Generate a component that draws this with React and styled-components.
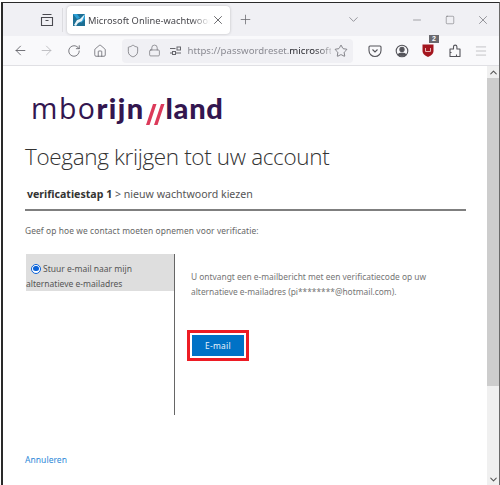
import React from 'react';
import styled, { createGlobalStyle } from 'styled-components';
import { ArrowLeft, ArrowRight, RotateCw, Home, Shield, Lock, Star, Menu, X, Plus, ChevronDown, ChevronUp, Minus, Square } from 'lucide-react';

const Global = createGlobalStyle`
  html, body { margin: 0; padding: 0; background: #fff; overflow: hidden; }
  * { box-sizing: border-box; }
`;

const Frame = styled.div`
  width: 499px; height: 483px; margin: 2px 0 0 1px;
  border-left: 2px solid #2a2a2a; border-top: 1px solid #2a2a2a; border-right: 1px solid #6a6a6a;
  display: flex; flex-direction: column; overflow: hidden;
  font-family: "Noto Sans", "Open Sans", sans-serif;
`;
const TabBar = styled.div`
  height: 33px; flex: none; background: #f0f0f4; display: flex; align-items: center; position: relative;
`;
const TabListButton = styled.div`
  width: 24px; margin-left: 32px; display: flex; justify-content: center; color: #4a4a50;
`;
const Separator = styled.div`
  width: 1px; height: 24px; background: #dcdce0; margin-left: 3px;
`;
const Tab = styled.div`
  width: 163px; height: 28px; margin-left: 4px; background: #fff; border-radius: 4px;
  box-shadow: 0 0 3px rgba(0,0,0,.22); display: flex; align-items: center; padding-left: 6px;
  margin-top: 1px;
`;
const TabTitle = styled.span`
  font-family: "Noto Sans", sans-serif; font-size: 9.3px; color: #47474c; width: 122px; margin-left: 3px; white-space: nowrap; overflow: hidden;
  -webkit-mask-image: linear-gradient(90deg, #000 85%, transparent);
  mask-image: linear-gradient(90deg, #000 85%, transparent);
`;
const TabClose = styled.div`margin-left: 1px; display: flex; color: #3f3f44;`;
const NewTab = styled.div`margin-left: 8px; display: flex; color: #66666b; `;
const Spacer = styled.div`flex: 1;`;
const WinControls = styled.div`display: flex; align-items: center; color: #55555b;`;
const TabsChevron = styled.div`width: 16px; display: flex; justify-content: center; margin-right: 39px; color: #77777d;`;
const WinButton = styled.div`width: 33px; display: flex; justify-content: center;`;

const Toolbar = styled.div`
  height: 30px; flex: none; background: #f9f9fb; border-bottom: 1px solid #e0e0e4; display: flex; align-items: center; padding-left: 4px;
`;
const Tool = styled.div`
  width: 26.65px; flex: none; display: flex; justify-content: center; align-items: center; position: relative;
  color: ${p => p.$dim ? '#b4b4b8' : '#55555b'};
`;
const UrlBar = styled.div`
  width: 231px; height: 24px; margin: 0 9px 0 8px; background: #f0f0f4; border-radius: 4px; display: flex; align-items: center; padding-left: 1px; flex: none; position: relative;
`;
const UrlIcon = styled.div`width: 21px; display: flex; justify-content: center; color: #66666c; flex: none;`;
const UrlText = styled.div`
  font-family: "Noto Sans", sans-serif; font-size: 9.6px; color: #8a8a92; white-space: nowrap; overflow: hidden; width: 143px; margin-left: 2px;
  -webkit-mask-image: linear-gradient(90deg, #000 88%, rgba(0,0,0,.2));
  mask-image: linear-gradient(90deg, #000 88%, rgba(0,0,0,.2));
  b { font-weight: 400; color: #2a2a30; }
`;
const UrlStar = styled.div`margin-left: 3px; display: flex; color: #55555b;`;
const Badge = styled.span`
  position: absolute; top: -8px; left: 14px; width: 10px; height: 8px; background: #6a6a6f; color: #fff; font: 700 7px/8px "Liberation Sans", sans-serif; text-align: center;
`;

const Viewport = styled.div`flex: 1; display: flex; min-height: 0; background: #fff;`;
const Page = styled.div`flex: 1; padding: 23px 0 0 22px; display: flex; flex-direction: column; min-width: 0;`;
const Logo = styled.div`
  font-family: "Lato", "Open Sans", sans-serif; font-size: 29px; line-height: 38px; height: 38px; color: #33164f; margin-left: 6px; display: flex; align-items: baseline;
`;
const LogoLight = styled.span`font-family: "Open Sans", sans-serif; font-size: 28.5px; font-weight: 400; letter-spacing: 1.5px;`;
const LogoBold = styled.b`font-weight: 900; letter-spacing: ${p => p.$spacing}px;`;
const LogoSlashes = styled.svg`width: 21px; height: 21px; align-self: flex-end; margin: 0 0 2px 0; flex: none;`;
const Heading = styled.h1`
  margin: 13px 0 0; font-family: "Open Sans", "Noto Sans", sans-serif; font-weight: 300; font-size: 22.5px; letter-spacing: -.35px; line-height: 34px; color: #333; white-space: nowrap;
`;
const Crumbs = styled.div`
  margin-top: 12px; height: 25px; width: 441px; border-bottom: 2px solid #7f7f7f; font-size: 10.6px; line-height: 16px; color: #555; padding-left: 2px;
  b { color: #333; font-weight: 700; }
`;
const Intro = styled.p`
  margin: 13px 0 0; font-size: 8.4px; line-height: 14px; color: #666; letter-spacing: .1px; white-space: nowrap;
`;
const Split = styled.div`display: flex; margin-top: 16px; height: 161px; margin-left: 1px;`;
const Options = styled.div`width: 149px; border-right: 1px solid #666; flex: none;`;
const Option = styled.div`
  background: #dedede; height: 37px; font-size: 8.5px; line-height: 15px; color: #555; padding-top: 7px;
`;
const Radio = styled.span`
  display: inline-block; width: 10px; height: 10px; border-radius: 50%; border: 1.5px solid #0a62d8; margin: 0 2px 0 5px; vertical-align: -1.5px; position: relative; background: #fff;
  &::after { content: ""; position: absolute; inset: 1.2px; border-radius: 50%; background: #0a62d8; }
`;
const Detail = styled.div`flex: 1; padding: 15px 0 0 16px; position: relative;`;
const DetailText = styled.p`
  margin: 0; width: 280px; font-size: 8.4px; line-height: 15px; color: #757575;
`;
const ButtonRing = styled.div`
  margin: 31px 0 0 -4px; width: 62px; height: 31px; border: 3px solid #ed1c24; padding: 2px;
`;
const EmailButton = styled.div`
  width: 100%; height: 100%; background: #0072c6; color: #e8f2fa; font-size: 8.4px; line-height: 21px; text-align: center; letter-spacing: .3px;
`;
const Cancel = styled.a`
  margin-top: 39px; font-size: 8.5px; line-height: 12px; color: #2b88d8; letter-spacing: .05px;
`;
const ScrollBar = styled.div`width: 12px; flex: none; background: #f0f0f0; display: flex; flex-direction: column;`;
const ScrollArrow = styled.div`height: 12px; flex: none; display: flex; justify-content: center; align-items: center; color: #555; `;
const ScrollThumb = styled.div`height: 308px; flex: none; background: #cdcdcd;`;

const Favicon = () => (
  <svg width="12" height="12" viewBox="0 0 12 12">
    <rect width="12" height="12" fill="#1d6f94" />
    <path d="M0 0h4l3 4-3 1zM12 0v5L8 9 6 6z" fill="#2c9fd6" />
    <path d="M1 11l3-5 3-1 5-5-3 7-4 2-2 3z" fill="#e8f3f8" />
  </svg>
);
const TabsIcon = () => (
  <svg width="14" height="14" viewBox="0 0 14 14" fill="none" stroke="currentColor" strokeWidth="1.1">
    <path d="M2.5 1.5h9M1.5 4.5h11v8h-11zM5.5 7.5h3" />
  </svg>
);
const Sliders = () => (
  <svg width="13" height="13" viewBox="0 0 13 13" fill="none" stroke="currentColor" strokeWidth="1">
    <path d="M1 4.5h5.5M1 9h2" /><rect x="8" y="3" width="3.5" height="3" /><rect x="3.5" y="7.5" width="3" height="3" /><path d="M7 9h5" />
  </svg>
);
const Pocket = () => (
  <svg width="14" height="14" viewBox="0 0 14 14" fill="none" stroke="currentColor" strokeWidth="1.1">
    <path d="M2 2h10a1 1 0 0 1 1 1v3.5a6 6 0 0 1-12 0V3a1 1 0 0 1 1-1z" /><path d="M4.5 5.5L7 8l2.5-2.5" />
  </svg>
);
const Account = () => (
  <svg width="14" height="14" viewBox="0 0 14 14" fill="none" stroke="currentColor" strokeWidth="1.1">
    <circle cx="7" cy="7" r="5.8" /><circle cx="7" cy="5.4" r="2.1" fill="currentColor" /><path d="M3.2 10.6c1-2 6.6-2 7.6 0-1.8 1.8-5.8 1.8-7.6 0z" fill="currentColor" />
  </svg>
);
const UBlock = () => (
  <svg width="14" height="15" viewBox="0 0 14 15">
    <path d="M1.5 1.5h11v6.5c0 3-3 5-5.5 6-2.5-1-5.5-3-5.5-6z" fill="#a4161f" />
    <path d="M4.5 5v3.5h5V5" fill="none" stroke="#e8b0b0" strokeWidth="1" />
  </svg>
);
const Extensions = () => (
  <svg width="14" height="15" viewBox="0 0 14 15" fill="none" stroke="currentColor" strokeWidth="1.1" strokeLinejoin="round">
    <path d="M2 13.5V6h3.5V3.8a1.7 1.7 0 0 1 3.4 0V6h3.1v7.5z" />
    <path d="M2 9.5h1.5M8.5 13.5v-2" />
  </svg>
);

export default function App() {
  return (
    <>
      <Global />
      <Frame>
        <TabBar>
          <TabListButton><TabsIcon /></TabListButton>
          <Separator />
          <Tab>
            <Favicon />
            <TabTitle>Microsoft Online-wachtwoord opnieuw</TabTitle>
            <TabClose><X size={14} strokeWidth={1.3} /></TabClose>
          </Tab>
          <NewTab><Plus size={15} strokeWidth={1.2} /></NewTab>
          <Spacer />
          <WinControls>
            <TabsChevron><ChevronDown size={15} strokeWidth={1.2} /></TabsChevron>
            <WinButton><Minus size={12} strokeWidth={1} /></WinButton>
            <WinButton><Square size={10} strokeWidth={1.1} /></WinButton>
            <WinButton><X size={14} strokeWidth={1} /></WinButton>
          </WinControls>
        </TabBar>
        <Toolbar>
          <Tool><ArrowLeft size={15} strokeWidth={1.3} /></Tool>
          <Tool $dim><ArrowRight size={15} strokeWidth={1.3} /></Tool>
          <Tool><RotateCw size={14} strokeWidth={1.3} /></Tool>
          <Tool><Home size={14} strokeWidth={1.2} /></Tool>
          <UrlBar>
            <UrlIcon><Shield size={14} strokeWidth={1.2} /></UrlIcon>
            <UrlIcon><Lock size={13} strokeWidth={1.2} /></UrlIcon>
            <UrlIcon><Sliders /></UrlIcon>
            <UrlText>https://passwordreset.<b>microsoftonline.com</b></UrlText>
            <UrlStar><Star size={14} strokeWidth={1.2} /></UrlStar>
          </UrlBar>
          <Tool><Pocket /></Tool>
          <Tool><Account /></Tool>
          <Tool><UBlock /><Badge>2</Badge></Tool>
          <Tool><Extensions /></Tool>
          <Tool $dim><Menu size={14} strokeWidth={1.3} /></Tool>
        </Toolbar>
        <Viewport>
          <Page>
            <Logo>
              <LogoLight>mbo</LogoLight><LogoBold $spacing={1.4}>rijn</LogoBold>
              <LogoSlashes viewBox="0 0 21 21"><path d="M8 0h3.5L4.5 21H1zM16 0h3.5L12.5 21H9z" fill="#dc3a5a" /></LogoSlashes>
              <LogoBold $spacing={0.7}>land</LogoBold>
            </Logo>
            <Heading>Toegang krijgen tot uw account</Heading>
            <Crumbs><b>verificatiestap 1</b> &gt; nieuw wachtwoord kiezen</Crumbs>
            <Intro>Geef op hoe we contact moeten opnemen voor verificatie:</Intro>
            <Split>
              <Options>
                <Option><Radio />Stuur e-mail naar mijn<br />alternatieve e-mailadres</Option>
              </Options>
              <Detail>
                <DetailText>U ontvangt een e-mailbericht met een verificatiecode op uw alternatieve e-mailadres (pi********@hotmail.com).</DetailText>
                <ButtonRing><EmailButton>E-mail</EmailButton></ButtonRing>
              </Detail>
            </Split>
            <Cancel>Annuleren</Cancel>
          </Page>
          <ScrollBar>
            <ScrollArrow><ChevronUp size={11} strokeWidth={2.2} /></ScrollArrow>
            <ScrollThumb />
            <Spacer />
            <ScrollArrow><ChevronDown size={11} strokeWidth={2.2} /></ScrollArrow>
          </ScrollBar>
        </Viewport>
      </Frame>
    </>
  );
}
